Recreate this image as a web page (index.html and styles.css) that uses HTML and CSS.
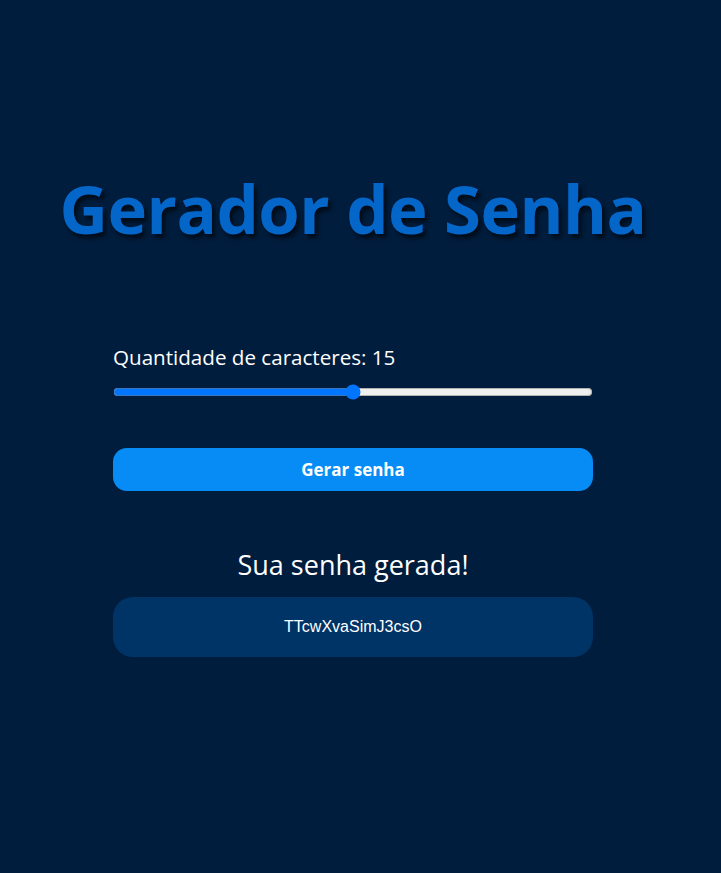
FILE: index.html
```html
<!DOCTYPE html>
<html lang="pt-BR">
<head>
<meta charset="utf-8">
<title>Gerador de Senha</title>
<link rel="stylesheet" href="styles.css">
</head>
<body>
<main class="page">
  <h1 class="title">Gerador de Senha</h1>
  <section class="panel">
    <label class="label" for="len">Quantidade de caracteres: <span>15</span></label>
    <input class="range" id="len" type="range" min="4" max="26" value="15">
    <button class="btn" type="button">Gerar senha</button>
    <h2 class="subtitle">Sua senha gerada!</h2>
    <div class="result">TTcwXvaSimJ3csO</div>
  </section>
</main>
</body>
</html>
```
FILE: styles.css
```css
* { box-sizing: border-box; }
html, body { margin: 0; padding: 0; }
body {
  background: #001d3d;
  min-height: 873px;
  font-family: "Open Sans", "Noto Sans", sans-serif;
  color: #ffffff;
}
.page {
  width: 706px;
  display: flex;
  flex-direction: column;
  align-items: center;
  padding-top: 160px;
}
.title {
  margin: 0;
  font-size: 67px;
  font-weight: 700;
  color: #0466c8;
  letter-spacing: -0.5px;
  text-shadow: 3px 4px 4px rgba(0, 0, 0, 0.6);
  line-height: 96px;
}
.panel {
  width: 480px;
  margin-top: 87px;
  display: flex;
  flex-direction: column;
}
.label {
  font-size: 20.6px;
  line-height: 28px;
}
.range {
  margin: 13px 0 0;
  width: 480px;
}
.btn {
  margin-top: 48px;
  height: 43px;
  border: none;
  border-radius: 14px;
  background: #068cf4;
  color: #fff;
  font-family: inherit;
  font-size: 17px;
  font-weight: 700;
  cursor: pointer;
}
.subtitle {
  margin: 56px 0 0;
  text-align: center;
  font-size: 27px;
  font-weight: 400;
  line-height: 36px;
}
.result {
  margin-top: 14px;
  height: 60px;
  border-radius: 20px;
  background: #003366;
  display: flex;
  align-items: center;
  justify-content: center;
  font-family: "Liberation Sans", Arial, sans-serif;
  font-size: 16px;
}
```
